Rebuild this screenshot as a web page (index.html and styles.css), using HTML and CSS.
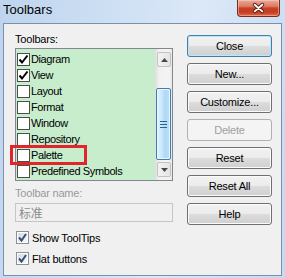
FILE: index.html
```html
<!DOCTYPE html>
<html>
<head>
<meta charset="utf-8">
<link rel="stylesheet" href="styles.css">
</head>
<body>
<div class="window">
  <div class="titlebar">
    <span class="title">Toolbars</span>
    <div class="close-x">
      <svg width="43" height="17" viewBox="0 0 43 17">
        <path d="M17.5 4.5 L25.5 11.5 M25.5 4.5 L17.5 11.5" stroke="#5a1c12" stroke-width="4" stroke-linecap="round" fill="none"/>
        <path d="M17.5 4.5 L25.5 11.5 M25.5 4.5 L17.5 11.5" stroke="#ffffff" stroke-width="2" stroke-linecap="round" fill="none"/>
      </svg>
    </div>
  </div>
  <div class="client">
    <div class="left">
      <div class="label">Toolbars:</div>
      <div class="listbox">
        <ul class="items">
          <li class="item"><span class="cb"><svg width="11" height="11" viewBox="0 0 11 11"><path d="M1.5 5.5 L4 8.5 L9.5 1.5" stroke="#000" stroke-width="2" fill="none"/></svg></span>Diagram</li>
          <li class="item"><span class="cb"><svg width="11" height="11" viewBox="0 0 11 11"><path d="M1.5 5.5 L4 8.5 L9.5 1.5" stroke="#000" stroke-width="2" fill="none"/></svg></span>View</li>
          <li class="item"><span class="cb"></span>Layout</li>
          <li class="item"><span class="cb"></span>Format</li>
          <li class="item"><span class="cb"></span>Window</li>
          <li class="item"><span class="cb"></span>Repository</li>
          <li class="item marked"><span class="cb"></span>Palette<span class="highlight"></span></li>
          <li class="item"><span class="cb"></span>Predefined Symbols</li>
        </ul>
        <div class="scrollbar">
          <div class="sb-btn up"><svg width="7" height="4" viewBox="0 0 7 4"><path d="M0 4 L3.5 0 L7 4 Z" fill="#4a4a4a"/></svg></div>
          <div class="sb-track">
            <div class="sb-thumb">
              <svg width="7" height="7" viewBox="0 0 7 7"><path d="M0 0.5 H7 M0 3.5 H7 M0 6.5 H7" stroke="#2f5f8e" stroke-width="1"/></svg>
            </div>
          </div>
          <div class="sb-btn down"><svg width="7" height="4" viewBox="0 0 7 4"><path d="M0 0 L7 0 L3.5 4 Z" fill="#4a4a4a"/></svg></div>
        </div>
      </div>
      <div class="label disabled name-label">Toolbar name:</div>
      <div class="textbox">标准</div>
      <div class="opt first"><span class="cb7"><svg width="11" height="11" viewBox="0 0 11 11"><path d="M2 5.5 L4.5 8.5 L9 2" stroke="#3a4c7c" stroke-width="2" fill="none"/></svg></span>Show ToolTips</div>
      <div class="opt"><span class="cb7"><svg width="11" height="11" viewBox="0 0 11 11"><path d="M2 5.5 L4.5 8.5 L9 2" stroke="#3a4c7c" stroke-width="2" fill="none"/></svg></span>Flat buttons</div>
    </div>
    <div class="buttons">
      <button class="btn default">Close</button>
      <button class="btn">New...</button>
      <button class="btn">Customize...</button>
      <button class="btn disabled-btn">Delete</button>
      <button class="btn">Reset</button>
      <button class="btn">Reset All</button>
      <button class="btn">Help</button>
    </div>
  </div>
</div>
</body>
</html>
```

FILE: styles.css
```css
* { box-sizing: border-box; }

body {
  margin: 0;
  width: 285px;
  height: 278px;
  overflow: hidden;
  font-family: "Liberation Sans", Arial, sans-serif;
  font-size: 11px;
  letter-spacing: -0.2px;
  color: #000;
}

.window {
  height: 278px;
  display: flex;
  flex-direction: column;
  background: linear-gradient(100deg, #bed4ee 0%, #d3e3f5 45%, #dbe8f7 60%, #c6daf1 100%);
}

.titlebar {
  height: 23px;
  flex-shrink: 0;
  display: flex;
  align-items: flex-start;
}

.title {
  font-size: 13px;
  line-height: 13px;
  letter-spacing: 0;
  margin-top: 3px;
  padding-left: 3px;
  color: #000;
}

.close-x {
  margin-left: auto;
  margin-right: 5px;
  width: 43px;
  height: 17px;
  border: 1px solid #7a2a1e;
  border-top: none;
  border-radius: 0 0 4px 4px;
  background: linear-gradient(#e8ab9c 0%, #dc7a63 40%, #c84125 50%, #c63c1f 75%, #dc6b48 100%);
  box-shadow: inset 0 0 0 1px rgba(255, 220, 210, 0.45);
  display: flex;
}

.client {
  flex: 1;
  margin: 0 3px 2px 3px;
  border: 1px solid #7b90ad;
  background: #f0f0f0;
  display: grid;
  grid-template-columns: 158px 85px;
  column-gap: 14px;
  padding: 9px 9px 0 11px;
  align-items: start;
}

.label {
  line-height: 13px;
  height: 13px;
  margin-bottom: 2px;
}

.disabled { color: #9a9a9a; }

.name-label {
  margin-top: 6px;
  margin-bottom: 3px;
}

.listbox {
  height: 133px;
  border: 1px solid #828790;
  background: #c7edcc;
  display: flex;
}

.items {
  list-style: none;
  margin: 0;
  padding: 2px 0 0 0;
  flex: 1;
}

.item {
  height: 16px;
  display: flex;
  align-items: center;
  padding-left: 1px;
  gap: 1px;
  white-space: nowrap;
  letter-spacing: -0.4px;
}

.marked { position: relative; }

.highlight {
  position: absolute;
  left: -6px;
  top: -2px;
  width: 77px;
  height: 20px;
  border: 3px solid #e0262a;
}

.cb {
  width: 13px;
  height: 13px;
  border: 1px solid #4d4d4d;
  background: #fff;
  display: flex;
  align-items: center;
  justify-content: center;
  flex-shrink: 0;
}

.scrollbar {
  width: 17px;
  display: flex;
  flex-direction: column;
  background: linear-gradient(90deg, #e3e3e3 0%, #f1f1f1 20%, #f4f4f4 80%, #e8e8e8 100%);
  border-left: 1px solid #e0e0e0;
}

.sb-btn {
  height: 15px;
  margin: 3px 1px 1px 1px;
  border: 1px solid #c2c2c2;
  border-radius: 2px;
  background: linear-gradient(90deg, #f3f3f3, #e4e4e4);
  display: flex;
  align-items: center;
  justify-content: center;
}

.sb-btn.down { margin: 1px 1px 3px 1px; }

.sb-track {
  flex: 1;
}

.sb-thumb {
  margin: 20px 1px 0 0;
  height: 72px;
  border: 1px solid #3c7fb1;
  border-radius: 2px;
  background: linear-gradient(90deg, #e3f3fd 0%, #c4e5fa 45%, #b0daf6 55%, #b9def7 100%);
  box-shadow: inset 0 0 0 1px #e9f6fe;
  display: flex;
  align-items: center;
  justify-content: center;
}

.textbox {
  height: 19px;
  border: 1px solid #c6c6c6;
  background: #f0f0f0;
  color: #8c8c8c;
  font-family: "Noto Sans CJK SC", "Liberation Sans", sans-serif;
  font-size: 12px;
  line-height: 17px;
  padding-left: 3px;
}

.opt {
  height: 21px;
  display: flex;
  align-items: center;
  gap: 3px;
  padding-left: 1px;
}

.opt.first { margin-top: 5px; }

.cb7 {
  width: 13px;
  height: 13px;
  border: 1px solid #8e8f8f;
  background: linear-gradient(135deg, #d2d6dc 0%, #eceef0 60%, #fbfbfb 100%);
  box-shadow: inset 0 0 0 1px #ffffff;
  display: flex;
  align-items: center;
  justify-content: center;
  flex-shrink: 0;
}

.buttons {
  display: flex;
  flex-direction: column;
  gap: 6px;
  margin-top: 2px;
}

.btn {
  height: 22px;
  padding: 0;
  font-family: "Liberation Sans", Arial, sans-serif;
  font-size: 11px;
  letter-spacing: -0.2px;
  color: #000;
  border: 1px solid #707070;
  border-radius: 3px;
  background: linear-gradient(#f2f2f2 0%, #ebebeb 50%, #dddddd 51%, #cfcfcf 100%);
  box-shadow: inset 0 0 0 1px #fbfbfb;
}

.btn.default {
  border-color: #3c7fb1;
  box-shadow: inset 0 0 0 1px #bfe5f7;
}

.btn.disabled-btn {
  border-color: #adb2b5;
  background: #f4f4f4;
  color: #a0a0a0;
  box-shadow: none;
}
```
